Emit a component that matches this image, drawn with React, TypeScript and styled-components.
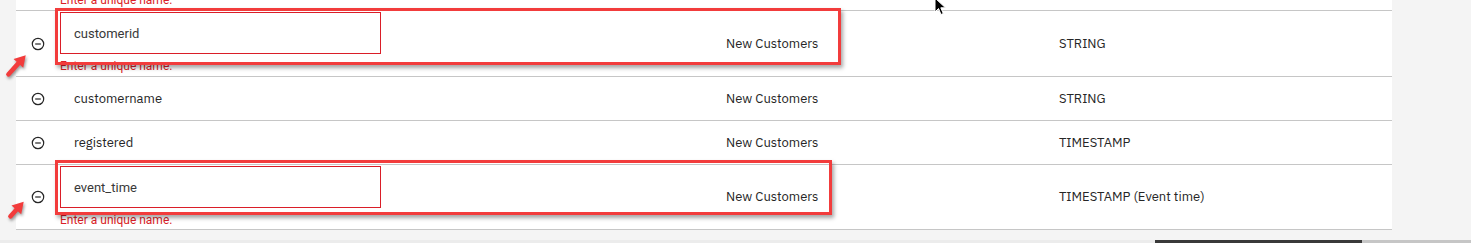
import React from "react";
import styled, { createGlobalStyle } from "styled-components";

const GlobalStyle = createGlobalStyle`
  html, body {
    margin: 0;
    padding: 0;
    background: #f4f4f4;
    overflow: hidden;
  }
  * {
    box-sizing: border-box;
  }
`;

type Field = {
  name: string;
  source: string;
  type: string;
  invalid?: boolean;
  padBottom?: number;
};

const fields: Field[] = [
  { name: "customerid", source: "New Customers", type: "STRING", invalid: true, padBottom: 2 },
  { name: "customername", source: "New Customers", type: "STRING" },
  { name: "registered", source: "New Customers", type: "TIMESTAMP" },
  { name: "event_time", source: "New Customers", type: "TIMESTAMP (Event time)", invalid: true, padBottom: 1 },
];

function RemoveIcon() {
  return (
    <svg width="14" height="14" viewBox="0 0 14 14" fill="none">
      <circle cx="7" cy="7" r="5.7" stroke="#262626" strokeWidth="1.2" />
      <line x1="4.2" y1="7" x2="9.8" y2="7" stroke="#262626" strokeWidth="1.2" />
    </svg>
  );
}

function PointerArrow({ length }: { length: number }) {
  return (
    <svg width="32" height="32" viewBox="0 0 32 32" fill="none">
      <g transform="translate(4 28) rotate(-48)">
        <rect x="0" y="-2.3" width={length} height="4.6" rx="2" fill="#f23c3c" />
        <polygon points={`${length + 9},0 ${length - 2},-6.5 ${length - 2},6.5`} fill="#f23c3c" />
      </g>
    </svg>
  );
}

function MouseCursor() {
  return (
    <svg width="14" height="20" viewBox="0 0 14 20">
      <path d="M1 1 L1 15 L4.5 11.5 L7 17.5 L9.3 16.5 L6.8 10.8 L11.5 10.8 Z" fill="#000" stroke="#fff" strokeWidth="1" />
    </svg>
  );
}

export default function App() {
  return (
    <>
      <GlobalStyle />
      <Screen>
        <Viewport>
          <Table>
            <TailRow>
              <span />
              <TailHelper>Enter a unique name.</TailHelper>
            </TailRow>
            {fields.map((f) => (
              <Row key={f.name}>
                <IconCell>
                  <RemoveIcon />
                </IconCell>
                {f.invalid ? (
                  <InputCell $pb={f.padBottom ?? 1}>
                    <NameInput defaultValue={f.name} />
                    <HelperText>Enter a unique name.</HelperText>
                  </InputCell>
                ) : (
                  <NameCell>{f.name}</NameCell>
                )}
                <TextCell>{f.source}</TextCell>
                <TextCell>{f.type}</TextCell>
              </Row>
            ))}
          </Table>
          <RightGutter />

          <Highlight $top={8} $width={786} $height={57} />
          <Highlight $top={160} $width={777} $height={55} />
          <ArrowMark $left={3} $top={48}>
            <PointerArrow length={19} />
          </ArrowMark>
          <ArrowMark $left={5} $top={190}>
            <PointerArrow length={13} />
          </ArrowMark>
          <CursorMark>
            <MouseCursor />
          </CursorMark>
        </Viewport>
        <ScrollBar>
          <ScrollTrack />
          <ScrollThumb />
          <ScrollRest />
        </ScrollBar>
      </Screen>
    </>
  );
}

const Screen = styled.div`
  width: 1471px;
  height: 243px;
  display: flex;
  flex-direction: column;
  background: #f4f4f4;
  overflow: hidden;
`;

const Viewport = styled.div`
  position: relative;
  height: 240px;
  display: flex;
  padding-left: 16px;
`;

const Table = styled.div`
  width: 1376px;
  align-self: flex-start;
  display: flex;
  flex-direction: column;
  background: #ffffff;
`;

const RightGutter = styled.div`
  flex: 1;
`;

const rowColumns = `
  display: grid;
  grid-template-columns: 44px 666px 333px 1fr;
  border-bottom: 1px solid #c6c6c6;
`;

const TailRow = styled.div`
  ${rowColumns}
  height: 11px;
  overflow: hidden;
  align-items: start;
`;

const Row = styled.div`
  ${rowColumns}
  min-height: 44px;
  align-items: center;
`;

const IconCell = styled.div`
  display: flex;
  justify-content: center;
  align-items: center;
`;

const TextCell = styled.div`
  font-family: "IBM Plex Sans", "Liberation Sans", sans-serif;
  font-size: 13px;
  color: #262626;
  line-height: 18px;
`;

const NameCell = styled(TextCell)`
  padding-left: 14px;
`;

const InputCell = styled.div<{ $pb: number }>`
  align-self: start;
  display: flex;
  flex-direction: column;
  padding: 1px 0 ${(p) => p.$pb}px;
`;

const NameInput = styled.input`
  width: 321px;
  height: 42px;
  border: 1px solid #da1e28;
  background: #ffffff;
  padding: 0 12px 0 13px;
  font-family: Roboto, "Liberation Sans", sans-serif;
  font-size: 13px;
  color: #393939;
  outline: none;
`;

const HelperText = styled.div`
  margin-top: 4px;
  font-family: Roboto, "Liberation Sans", sans-serif;
  font-size: 12px;
  line-height: 16px;
  color: #da1e28;
  white-space: nowrap;
`;

const TailHelper = styled(HelperText)`
  margin-top: -8px;
`;

const Highlight = styled.div<{ $top: number; $width: number; $height: number }>`
  position: absolute;
  left: 55px;
  top: ${(p) => p.$top}px;
  width: ${(p) => p.$width}px;
  height: ${(p) => p.$height}px;
  border: 3px solid #f23c3c;
  box-shadow: 2px 3px 4px rgba(0, 0, 0, 0.35);
  pointer-events: none;
`;

const ArrowMark = styled.div<{ $left: number; $top: number }>`
  position: absolute;
  left: ${(p) => p.$left}px;
  top: ${(p) => p.$top}px;
  width: 32px;
  height: 32px;
  filter: drop-shadow(1px 2px 1.5px rgba(0, 0, 0, 0.4));
  pointer-events: none;
`;

const CursorMark = styled.div`
  position: absolute;
  left: 934px;
  top: -3px;
  pointer-events: none;
`;

const ScrollBar = styled.div`
  height: 3px;
  display: flex;
`;

const ScrollTrack = styled.div`
  width: 1155px;
  background: #ececec;
`;

const ScrollThumb = styled.div`
  width: 207px;
  background: #393939;
`;

const ScrollRest = styled.div`
  flex: 1;
  background: #c6c6c6;
`;
